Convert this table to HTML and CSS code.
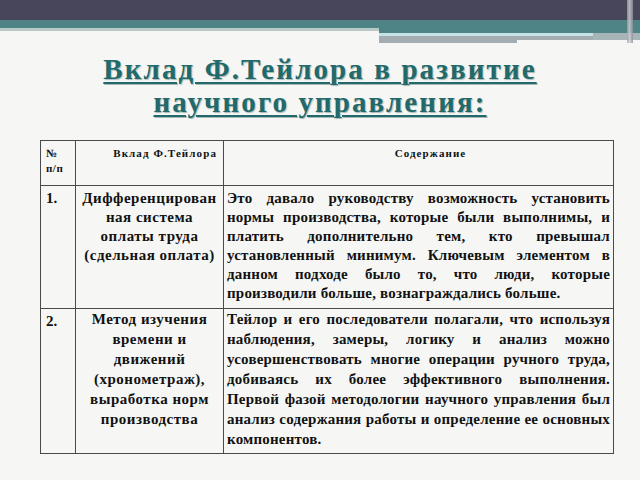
FILE: index.html
```html
<!DOCTYPE html>
<html lang="ru">
<head>
<meta charset="utf-8">
<link rel="stylesheet" href="styles.css">
</head>
<body>
<div class="slide">
  <header class="deco">
    <div class="dark"><span class="vline"></span></div>
    <div class="bands">
      <div class="band-left">
        <div class="teal-short"></div>
        <div class="grey-thin"></div>
      </div>
      <div class="band-right">
        <div class="teal-tall"></div>
        <div class="strips">
          <div class="cyan"></div>
          <div class="greys">
            <div class="grey-wide"></div>
            <div class="grey-narrow"></div>
          </div>
        </div>
      </div>
      <div class="band-end"></div>
    </div>
  </header>

  <h1 class="title"><span>Вклад Ф.Тейлора в развитие</span><br><span class="l2">научного управления:</span></h1>

  <table class="grid">
    <colgroup>
      <col class="c-num"><col class="c-name"><col class="c-text">
    </colgroup>
    <tr class="head">
      <td class="num">№<br>п/п</td>
      <td class="hname">Вклад Ф.Тейлора</td>
      <td class="htext">Содержание</td>
    </tr>
    <tr class="r1">
      <td class="num big">1.</td>
      <td class="name">Дифференцирован<br>ная система<br>оплаты труда<br>(сдельная оплата)</td>
      <td class="text">Это давало руководству возможность установить нормы производства, которые были выполнимы, и платить дополнительно тем, кто превышал установленный минимум. Ключевым элементом в данном подходе было то, что люди, которые производили больше, вознаграждались больше.</td>
    </tr>
    <tr class="r2">
      <td class="num big">2.</td>
      <td class="name">Метод изучения<br>времени и<br>движений<br>(хронометраж),<br>выработка норм<br>производства</td>
      <td class="text">Тейлор и его последователи полагали, что используя наблюдения, замеры, логику и анализ можно усовершенствовать многие операции ручного труда, добиваясь их более эффективного выполнения. Первой фазой методологии научного управления был анализ содержания работы и определение ее основных компонентов.</td>
    </tr>
  </table>
</div>
</body>
</html>
```

FILE: styles.css
```css
* { box-sizing: border-box; }
html, body { margin: 0; padding: 0; }
body {
  width: 640px;
  height: 480px;
  background: #f6f7f5;
  overflow: hidden;
  font-family: "Liberation Serif", "Times New Roman", serif;
}
.slide { width: 640px; height: 480px; }

.deco { height: 44px; display: flex; flex-direction: column; }
.dark {
  height: 20px;
  background: #47465b;
  position: relative;
}
.vline {
  position: absolute;
  left: 627px; top: 0;
  width: 6px; height: 43px;
  background: linear-gradient(90deg, #9a99a8, #cfd1d3 40%, #8d8f99);
  opacity: .8;
  z-index: 2;
}
.bands { display: flex; height: 24px; }
.band-left { width: 379px; display: flex; flex-direction: column; }
.teal-short { height: 8px; background: #4f8486; }
.grey-thin { height: 3px; background: #b9c9c8; }
.band-right { width: 214px; display: flex; flex-direction: column; }
.teal-tall { height: 13px; background: #4f8486; }
.cyan { height: 3px; background: #c5e3e6; }
.greys { display: flex; }
.grey-wide { width: 138px; height: 7px; background: #a4aeb2; }
.grey-narrow { flex: 1; height: 4px; background: #a4aeb2; }
.band-end { flex: 1; display: flex; flex-direction: column; }
.band-end::before { content: ""; height: 13px; background: #4f8486; }
.band-end::after { content: ""; height: 7px; background: #a8b5b8; }

.title {
  margin: 9px 0 0;
  text-align: center;
  font-family: "Liberation Serif", serif;
  font-weight: bold;
  font-size: 29px;
  line-height: 33px;
  color: #21696b;
  text-shadow: 1px 1px 1px rgba(20,70,70,.35);
  letter-spacing: 2.1px;
}
.title span {
  text-decoration: underline;
  text-decoration-thickness: 2px;
  text-underline-offset: 3px;
}

.grid {
  margin: 21px 0 0 40px;
  width: 573px;
  border-collapse: collapse;
  table-layout: fixed;
  color: #111;
  font-weight: bold;
}
.c-num { width: 35px; }
.c-name { width: 148px; }
.c-text { width: 390px; }
.grid td {
  border: 1.5px solid #4a4a4a;
  vertical-align: top;
  padding: 0;
}
.head td { height: 45px; font-size: 11px; line-height: 15px; padding-top: 5px; }
.head .num { padding-left: 5px; letter-spacing: .5px; }
.hname { text-align: right; padding-right: 6px !important; letter-spacing: 1.1px; }
.htext { text-align: center; padding-left: 24px !important; letter-spacing: 1.1px; }
.r1 td { height: 123px; }
.r2 td { height: 145px; }
.num.big { font-size: 15px; padding: 4px 0 0 5px; }
.name {
  text-align: center;
  font-size: 15px;
  line-height: 19px;
  letter-spacing: 0.5px;
  padding-top: 3px !important;
}
.r2 .name { line-height: 20px; padding-top: 0 !important; }
.text {
  text-align: justify;
  font-size: 15px;
  line-height: 19px;
  letter-spacing: 0.2px;
  padding: 3px 3px 0 3px !important;
}
.r2 .text { line-height: 20px; padding-top: 0 !important; }
```
